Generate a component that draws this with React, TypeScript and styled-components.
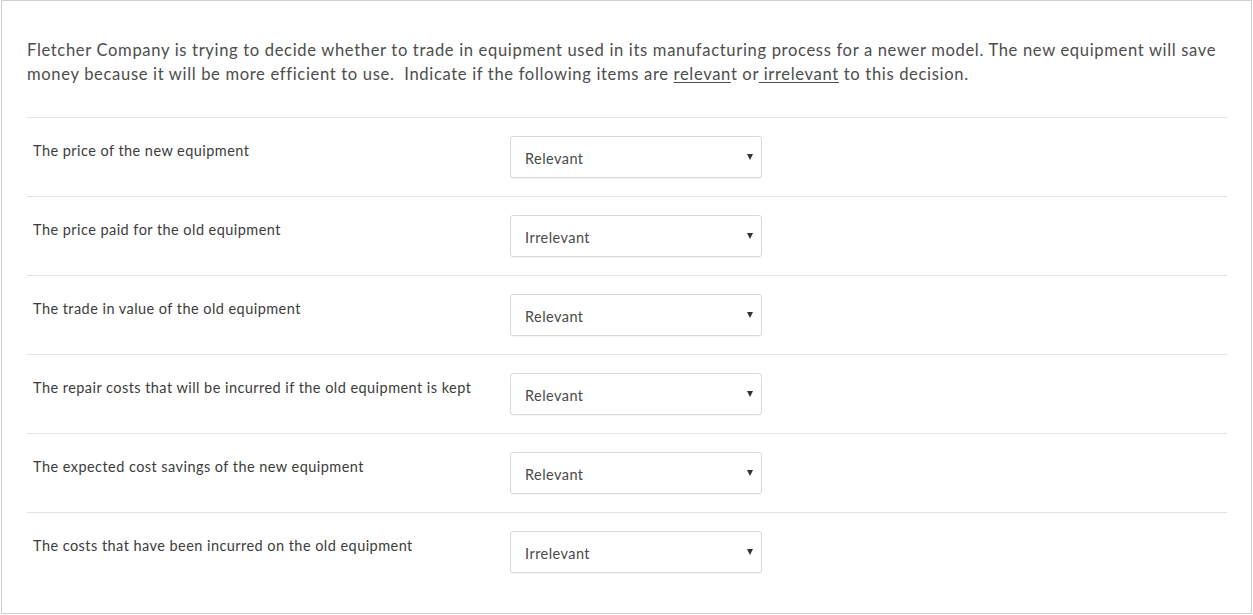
import styled, { createGlobalStyle } from 'styled-components';

const GlobalStyle = createGlobalStyle`
  html, body {
    margin: 0;
    padding: 0;
    background: #ffffff;
  }
  body {
    font-family: Lato, 'Open Sans', Arial, sans-serif;
  }
`;

const Panel = styled.div`
  box-sizing: border-box;
  margin-left: 1px;
  width: 1251px;
  height: 614px;
  border: 1px solid #cfcfcf;
  padding: 37px 24px 0 25px;
  background: #ffffff;
`;

const Question = styled.p`
  margin: 0 0 31px 0;
  font-size: 16.6px;
  letter-spacing: 0.65px;
  line-height: 24px;
  color: #4d4d4d;
  white-space: pre-wrap;
`;

const Under = styled.span`
  text-decoration: underline;
  text-underline-offset: 2px;
`;

const Rows = styled.div`
  display: flex;
  flex-direction: column;
`;

const Row = styled.div`
  display: grid;
  grid-template-columns: 477px 252px;
  align-items: start;
  border-top: 1px solid #e3e3e3;
  padding: 18px 0 18px 6px;
`;

const Label = styled.div`
  padding-top: 6px;
  font-size: 14.5px;
  letter-spacing: 0.45px;
  line-height: 18px;
  color: #3c3c3c;
  white-space: nowrap;
`;

const Dropdown = styled.div`
  box-sizing: border-box;
  height: 42px;
  display: flex;
  align-items: center;
  justify-content: space-between;
  padding: 2px 8px 0 14px;
  border: 1px solid #d9d9d9;
  border-radius: 3px;
  background: #ffffff;
  font-size: 14.5px;
  letter-spacing: 0.45px;
  color: #4a4a4a;
  box-shadow: 0 1px 1px rgba(0, 0, 0, 0.04);
`;

const Caret = styled.span`
  width: 0;
  height: 0;
  margin-top: -3px;
  border-left: 3.5px solid transparent;
  border-right: 3.5px solid transparent;
  border-top: 6px solid #333333;
`;

const items: { label: string; value: string }[] = [
  { label: 'The price of the new equipment', value: 'Relevant' },
  { label: 'The price paid for the old equipment', value: 'Irrelevant' },
  { label: 'The trade in value of the old equipment', value: 'Relevant' },
  { label: 'The repair costs that will be incurred if the old equipment is kept', value: 'Relevant' },
  { label: 'The expected cost savings of the new equipment', value: 'Relevant' },
  { label: 'The costs that have been incurred on the old equipment', value: 'Irrelevant' },
];

const App = () => {
  return (
    <>
      <GlobalStyle />
      <Panel>
        <Question>
          Fletcher Company is trying to decide whether to trade in equipment used in its manufacturing process for a
          newer model. The new equipment will save
          <br />
          money because it will be more efficient to use.{'  '}Indicate if the following items are{' '}
          <Under>relevan</Under>t or<Under> irrelevant</Under> to this decision.
        </Question>
        <Rows>
          {items.map((item) => (
            <Row key={item.label}>
              <Label>{item.label}</Label>
              <Dropdown>
                <span>{item.value}</span>
                <Caret />
              </Dropdown>
            </Row>
          ))}
        </Rows>
      </Panel>
    </>
  );
};

export default App;
